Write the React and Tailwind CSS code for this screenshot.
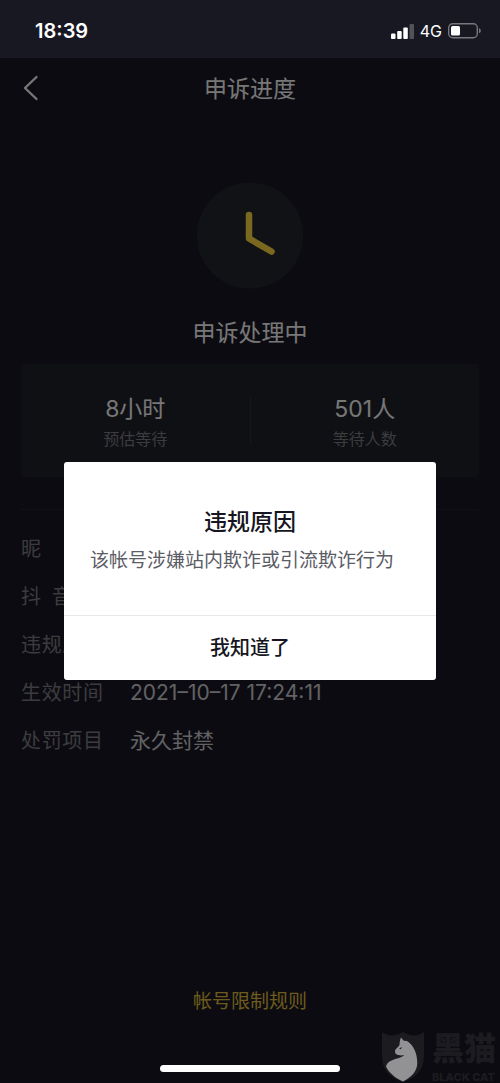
import { useState } from 'react';

const rows = [
  { label: '昵称', value: '' },
  { label: '抖音号', value: '' },
  { label: '违规原因', value: '' },
  { label: '生效时间', value: '2021–10–17 17:24:11' },
  { label: '处罚项目', value: '永久封禁' },
];

const stats = [
  { value: '8小时', label: '预估等待' },
  { value: '501人', label: '等待人数' },
];

function StatusBar() {
  return (
    <div className="h-[58px] pt-1 pl-[35px] pr-[19px] bg-[#181823] flex items-center justify-between text-white">
      <span className="text-xl font-semibold">18:39</span>
      <div className="flex items-center gap-[6px]">
        <svg width="23" height="15" viewBox="0 0 23 15" fill="currentColor" aria-hidden="true">
          <rect x="0" y="9.500" width="4.500" height="5.500" rx="1" />
          <rect x="6.200" y="7" width="4.500" height="8" rx="1" />
          <rect x="12.300" y="3.500" width="4.500" height="11.500" rx="1" />
          <rect x="18.500" y="0" width="4.500" height="15" rx="1" opacity=".25" />
        </svg>
        <span className="text-base">4G</span>
        <svg width="33" height="16" viewBox="0 0 33 16" aria-hidden="true">
          <rect x="0.700" y="0.700" width="28.600" height="14" rx="4" fill="none" stroke="#77777e" strokeWidth="1.400" />
          <rect x="3" y="3" width="9" height="9.500" rx="1.500" fill="#fff" />
          <path d="M31 5.200c1.300.5 1.800 1.400 1.800 2.500s-.5 2-1.800 2.500z" fill="#77777e" />
        </svg>
      </div>
    </div>
  );
}

function Watermark() {
  return (
    <div className="absolute bottom-0 right-1 z-20 pointer-events-none flex gap-[7px] text-[#1c1b1f]" aria-hidden="true">
      <svg className="shrink-0" width="44" height="52" viewBox="0 0 44 52">
        <path d="M1 1c7 5 14 4 21 0 7 4 14 5 21 0v24c0 14-8 22-21 26C9 47 1 39 1 25z" fill="#1c1b1f" />
        <path d="M20 6.500l2.800 3.200 3.200.3C31.500 13 36.500 21.500 36.300 32.500 36 40 31 46 22 50.500 15 47.500 8 42 5 35.500 6 31 11 28.800 16 27.500c4-1 6.500-2.300 7-3.500-2 .6-4 .5-5.500 0-2 0-3.500-1.200-3.500-3.500 0-2.500 3-4 4.500-6.500.2-2.500.5-5.500 1.500-7.500z" fill="#929295" />
        <path d="M18 17.500l2.800-1.500-.8 2.200z" fill="#1c1b1f" />
      </svg>
      <div className="whitespace-nowrap">
        <p className="text-[32px] leading-9 font-black">黑猫</p>
        <p className="mt-1 text-[11px] leading-3 font-extrabold">BLACK CAT</p>
      </div>
    </div>
  );
}

export default function App() {
  const [open, setOpen] = useState(true);

  return (
    <div className="relative min-h-screen flex flex-col bg-[#181722] font-[Inter,'Noto_Sans_CJK_SC',sans-serif]">
      <StatusBar />
      <div className="relative flex-1 flex flex-col">
        <header className="h-[60px] px-5 grid grid-cols-[1fr_auto_1fr] items-center text-[#eee]">
          <button type="button" aria-label="返回" className="justify-self-start">
            <svg width="22" height="28" viewBox="0 0 22 28" fill="none" stroke="currentColor" strokeWidth="2.400" strokeLinecap="round" strokeLinejoin="round">
              <path d="M16.500 3L5 14l11.500 11" />
            </svg>
          </button>
          <h1 className="pt-[2px] text-[23px] leading-8">申诉进度</h1>
        </header>

        <main className="flex-1 flex flex-col px-[21px] pt-16">
          <svg className="mx-auto" width="107" height="107" viewBox="0 0 107 107" aria-hidden="true">
            <circle cx="53" cy="53.500" r="53" fill="#22252b" />
            <path d="M52 33v23.500l22.500 13" fill="none" stroke="#f4d03c" strokeWidth="6.500" strokeLinecap="round" strokeLinejoin="round" />
          </svg>
          <h2 className="mt-7 text-center text-[23px] leading-8 text-[#eee]">申诉处理中</h2>

          <div className="mt-[15px] h-[113px] rounded-sm bg-[#1e2028] grid grid-cols-[1fr_auto_1fr] items-center">
            <div className="pt-1 text-center">
              <p className="text-[23px] leading-7 text-[#eee]">{stats[0].value}</p>
              <p className="mt-1 text-base leading-6 text-[#78787e]">{stats[0].label}</p>
            </div>
            <div className="w-px h-12 bg-[#2d2d36]" />
            <div className="pt-1 text-center">
              <p className="text-[23px] leading-7 text-[#eee]">{stats[1].value}</p>
              <p className="mt-1 text-base leading-6 text-[#78787e]">{stats[1].label}</p>
            </div>
          </div>

          <dl className="mt-8 pt-[15px] border-t border-[#24232e]">
            {rows.map(r => (
              <div key={r.label} className="h-12 flex items-center gap-[27px]">
                <dt className="w-[82px] text-xl [text-align-last:justify] text-[#78787e]">{r.label}</dt>
                <dd className="text-[21px] text-[#c4c4c8]">{r.value}</dd>
              </div>
            ))}
          </dl>

          <a href="#rules" className="mt-auto mb-[67px] self-center text-[19px] leading-7 text-[#d8b638]">帐号限制规则</a>
        </main>

        {open && (
          <div className="absolute inset-0 z-10 px-16 flex items-center bg-black/50">
            <div role="dialog" aria-modal="true" aria-labelledby="reason" className="w-full rounded-[3px] bg-white text-[#161622]">
              <div className="pt-11 pb-[39px] px-[26px]">
                <h3 id="reason" className="text-center text-[23px] leading-8 font-medium">违规原因</h3>
                <p className="mt-2 text-[19px] leading-[30px] text-[#5c5c66]">该帐号涉嫌站内欺诈或引流欺诈行为</p>
              </div>
              <button type="button" onClick={() => setOpen(false)} className="w-full h-[65px] border-t border-[#e8e8e8] text-xl font-medium">我知道了</button>
            </div>
          </div>
        )}
      </div>
      <Watermark />
      <div className="absolute bottom-[11px] left-1/2 z-20 w-[180px] h-[7px] -translate-x-1/2 rounded-full bg-white" />
    </div>
  );
}
